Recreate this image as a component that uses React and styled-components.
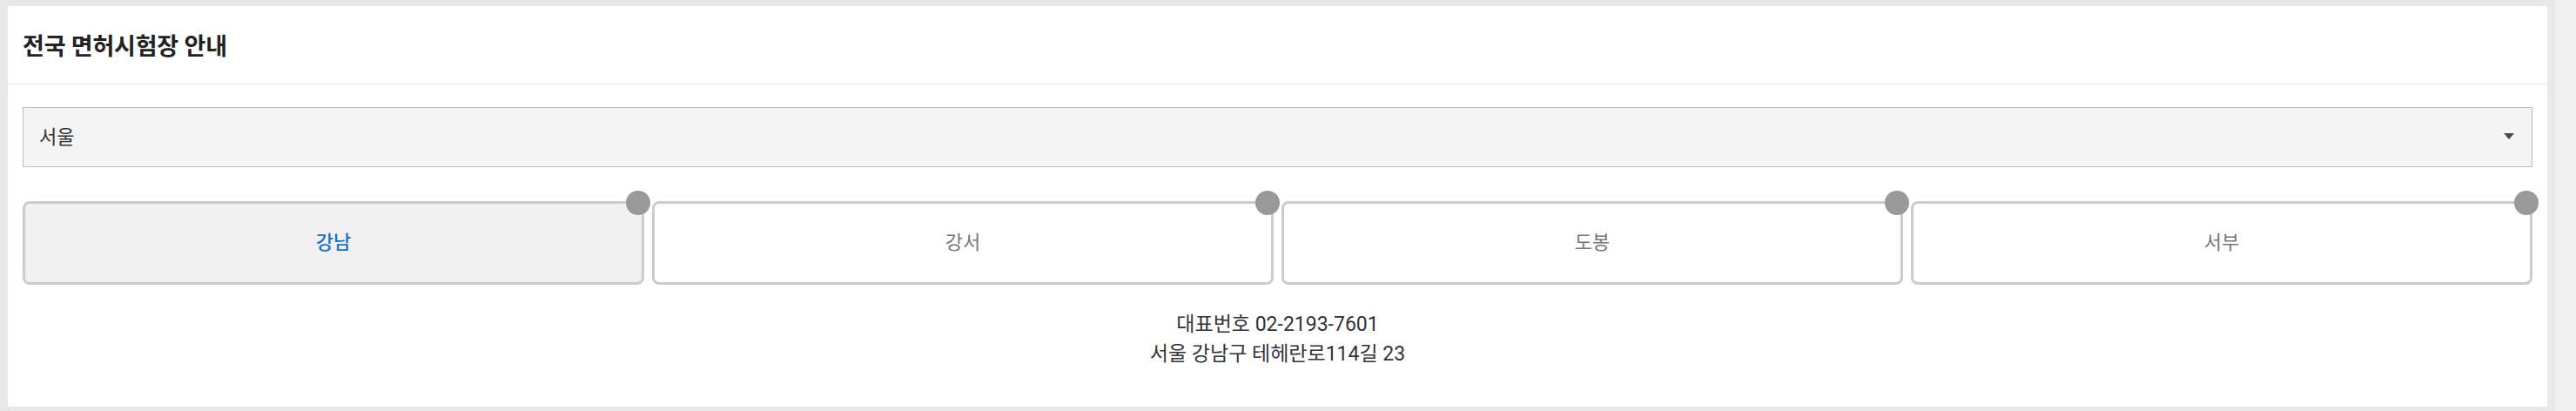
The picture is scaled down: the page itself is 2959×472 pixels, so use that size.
import React, { useState } from "react";
import styled, { createGlobalStyle } from "styled-components";

const Global = createGlobalStyle`
  html, body { margin: 0; padding: 0; }
  body {
    background: #e8e8e8;
    overflow: hidden;
    font-family: Roboto, "Noto Sans CJK KR", "Noto Sans", sans-serif;
  }
`;

const Page = styled.div`
  display: flex;
  width: 2959px;
  height: 472px;
`;

const Main = styled.div`
  flex: 1;
  padding: 7px 9px 0 9px;
`;

const ScrollTrack = styled.div`
  width: 24px;
  background: #f0f0f0;
`;

const Card = styled.section`
  background: #ffffff;
  height: 460px;
  display: flex;
  flex-direction: column;
`;

const Header = styled.header`
  height: 89px;
  border-bottom: 1px solid #e6e6e6;
  display: flex;
  align-items: center;
  padding: 0 17px;
`;

const Title = styled.h2`
  margin: 0;
  font-size: 27px;
  font-weight: 700;
  color: #222;
  letter-spacing: -0.2px;
`;

const Body = styled.div`
  padding: 26px 17px 0 17px;
  display: flex;
  flex-direction: column;
`;

const SelectWrap = styled.div`
  position: relative;
  height: 69px;
`;

const Select = styled.select`
  appearance: none;
  -webkit-appearance: none;
  width: 100%;
  height: 100%;
  box-sizing: border-box;
  border: 1px solid #bdbdbd;
  border-radius: 0;
  background: #f4f4f4;
  padding: 0 18px;
  font-family: Roboto, "Noto Sans CJK KR", sans-serif;
  font-size: 22px;
  color: #333;
  outline: none;
`;

const Caret = styled.span`
  position: absolute;
  right: 21px;
  top: 30px;
  width: 0;
  height: 0;
  border-left: 6px solid transparent;
  border-right: 6px solid transparent;
  border-top: 7px solid #4a4a4a;
  pointer-events: none;
`;

const Tabs = styled.div`
  margin-top: 39px;
  display: grid;
  grid-template-columns: repeat(4, 1fr);
  gap: 9px;
`;

const Tab = styled.button`
  position: relative;
  height: 96px;
  box-sizing: border-box;
  border: 3px solid #cccccc;
  border-radius: 8px;
  background: ${(p) => (p.$active ? "#f1f1f1" : "#ffffff")};
  color: ${(p) => (p.$active ? "#1a73c8" : "#777777")};
  font-family: Roboto, "Noto Sans CJK KR", sans-serif;
  font-size: 22px;
  font-weight: ${(p) => (p.$active ? 500 : 400)};
  cursor: pointer;
  padding: 0 0 7px 0;
`;

const Dot = styled.span`
  position: absolute;
  top: -15px;
  right: -10px;
  width: 28px;
  height: 28px;
  border-radius: 50%;
  background: #999999;
`;

const Info = styled.div`
  margin-top: 29px;
  text-align: center;
  font-size: 23px;
  line-height: 34px;
  color: #333;
`;

const centers = [
  { name: "강남", tel: "02-2193-7601", addr: "서울 강남구 테헤란로114길 23" },
  { name: "강서", tel: "02-2606-1911", addr: "서울 강서구 남부순환로 162" },
  { name: "도봉", tel: "02-3491-5201", addr: "서울 도봉구 도봉로 903" },
  { name: "서부", tel: "02-3496-3851", addr: "서울 마포구 월드컵로 400" },
];

export default function App() {
  const [active, setActive] = useState(0);
  const c = centers[active];
  return (
    <>
      <Global />
      <Page>
        <Main>
          <Card>
            <Header>
              <Title>전국 면허시험장 안내</Title>
            </Header>
            <Body>
              <SelectWrap>
                <Select defaultValue="서울">
                  <option value="서울">서울</option>
                  <option value="경기">경기</option>
                  <option value="부산">부산</option>
                </Select>
                <Caret />
              </SelectWrap>
              <Tabs>
                {centers.map((t, i) => (
                  <Tab key={t.name} $active={i === active} onClick={() => setActive(i)}>
                    {t.name}
                    <Dot />
                  </Tab>
                ))}
              </Tabs>
              <Info>
                <div>대표번호 {c.tel}</div>
                <div>{c.addr}</div>
              </Info>
            </Body>
          </Card>
        </Main>
        <ScrollTrack />
      </Page>
    </>
  );
}
